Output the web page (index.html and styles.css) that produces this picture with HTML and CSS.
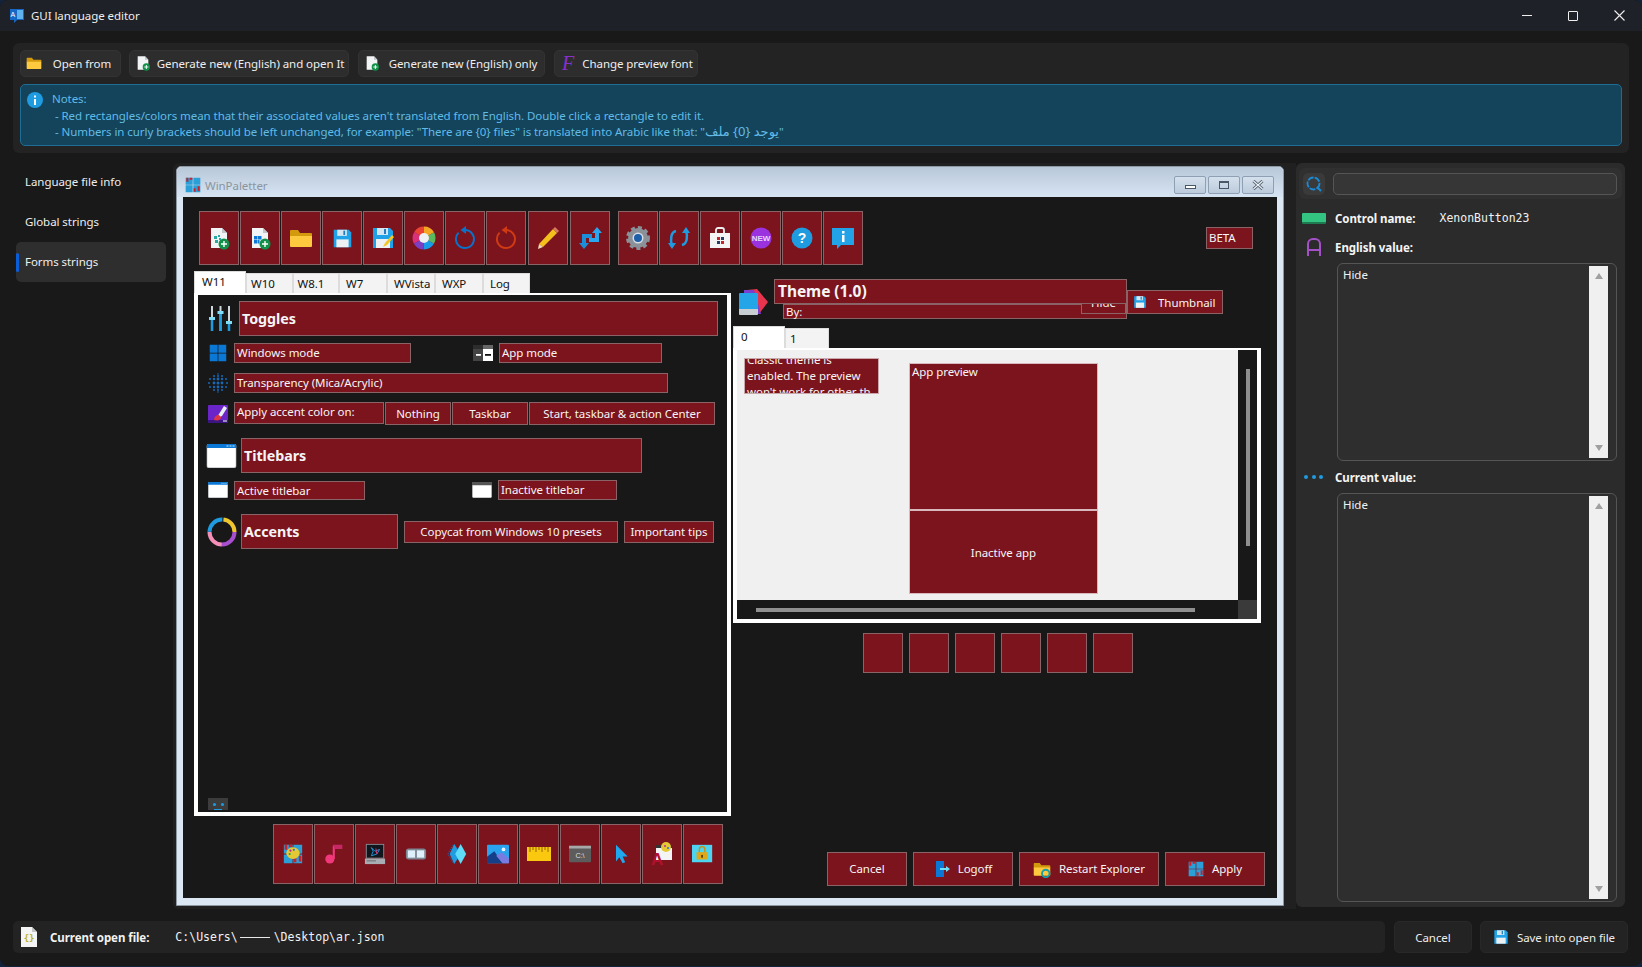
FILE: index.html
```html
<!DOCTYPE html>
<html lang="en">
<head>
    <meta charset="UTF-8">
    <title>GUI language editor</title>
    <link rel="stylesheet" href="styles.css">
</head>
<body>
<svg class="sprite" xmlns="http://www.w3.org/2000/svg">
    <symbol id="floppy" viewBox="0 0 24 24">
        <path d="M2 2h17l3 3v17H2z" fill="#1fa2e8"/>
        <rect x="6" y="2" width="11" height="7" fill="#d5e6f2"/>
        <rect x="13" y="3" width="2" height="5" fill="#1f7fc0"/>
        <rect x="5" y="13" width="14" height="9" fill="#eef1f4"/>
    </symbol>
    <symbol id="folder" viewBox="0 0 24 24">
        <path d="M1 5a1 1 0 0 1 1-1h7l2 3h11a1 1 0 0 1 1 1v3H1z" fill="#d49a0e"/>
        <path d="M1 10h22v10a1 1 0 0 1-1 1H2a1 1 0 0 1-1-1z" fill="#fcc93f"/>
    </symbol>
    <symbol id="newfile" viewBox="0 0 24 24">
        <path d="M4 2h11l5 5v15H4z" fill="#f1f3f4"/>
        <path d="M15 2l5 5h-5z" fill="#bfc5ca"/>
        <circle cx="17" cy="18" r="5.5" fill="#12904a"/>
        <path d="M17 15v6M14 18h6" stroke="#fff" stroke-width="1.4"/>
    </symbol>
    <symbol id="winlogo" viewBox="0 0 24 24">
        <path d="M1 1h10.5v10.5H1zM12.5 1H23v10.5H12.5zM1 12.5h10.5V23H1zM12.5 12.5H23V23H12.5z" fill="#0a78d4"/>
    </symbol>
    <symbol id="wintile" viewBox="0 0 24 24">
        <path d="M1 1h10.5v10.5H1zM12.5 1H23v10.5H12.5zM1 12.5h10.5V23H1zM12.5 12.5H23V23H12.5z" fill="#2a9fd8"/>
        <path d="M2 1h3v6H2zM7 1h4v3H7zM19 14h3v7h-3zM13 17h3v5h-3z" fill="#c8232c"/>
    </symbol>
    <symbol id="titlebar" viewBox="0 0 30 24">
        <rect x="0.5" y="0.5" width="29" height="23" rx="1.5" fill="#fff" stroke="#cfd3d8"/>
        <path d="M0 2a2 2 0 0 1 2-2h26a2 2 0 0 1 2 2v2H0z" fill="#0a78d4"/>
        <path d="M20 2h2M23 2h2M26 2h2" stroke="#cde5fa"/>
    </symbol>
</svg>

<div class="app">
    <header class="titlebar">
        <svg class="app-icon" viewBox="0 0 14 14"><path d="M0 0h14v11H7l-3 3v-3H0z" fill="#1668c4"/><rect x="7" y="1" width="6" height="9" fill="#5fb2ee"/><text x="0.6" y="8" font-size="7" fill="#fff" font-family="Liberation Sans">A</text></svg>
        <span class="app-title">GUI language editor</span>
        <div class="caption">
            <span class="cap-btn"><i class="cap-min"></i></span>
            <span class="cap-btn"><i class="cap-max"></i></span>
            <span class="cap-btn">
                <svg width="11" height="11" viewBox="0 0 11 11"><path d="M.5.5l10 10M10.500.5l-10 10" stroke="#eee" stroke-width="1.1"/></svg>
            </span>
        </div>
    </header>

    <section class="top-panel">
        <div class="tools">
            <button class="tool tool-open"><svg class="ico16"><use href="#folder"/></svg><span>Open from</span></button>
            <button class="tool tool-gen1"><svg class="ico16"><use href="#newfile"/></svg><span>Generate new (English) and open It</span></button>
            <button class="tool tool-gen2"><svg class="ico16"><use href="#newfile"/></svg><span>Generate new (English) only</span></button>
            <button class="tool tool-font"><i class="font-ico">F</i><span>Change preview font</span></button>
        </div>
        <div class="notes">
            <svg class="notes-ico" viewBox="0 0 16 16"><circle cx="8" cy="8" r="8" fill="#1f9be0"/><rect x="7" y="7" width="2" height="6" fill="#fff"/><rect x="7" y="3.500" width="2" height="2" fill="#fff"/></svg>
            <p class="notes-text">Notes:<br>
            &nbsp;- Red rectangles/colors mean that their associated values aren't translated from English. Double click a rectangle to edit it.<br>
            &nbsp;- Numbers in curly brackets should be left unchanged, for example: "There are {0} files" is translated into Arabic like that: "<span class="ar">يوجد {0} ملف</span>"</p>
        </div>
    </section>

    <main class="main">
        <nav class="sidebar">
            <a class="side-item">Language file info</a>
            <a class="side-item">Global strings</a>
            <a class="side-item active">Forms strings</a>
        </nav>

        <section class="canvas-panel">
            <div class="preview">
                <div class="preview-title">
                    <svg class="wp-logo" viewBox="0 0 24 24"><use href="#wintile"/></svg>
                    <span class="wp-name">WinPaletter</span>
                    <div class="wp-caps">
                        <span class="wp-cap"><i class="wp-min"></i></span>
                        <span class="wp-cap"><i class="wp-max"></i></span>
                        <span class="wp-cap"><svg width="12" height="10" viewBox="0 0 12 10"><path d="M1.500 1l9 8M10.500 1l-9 8" stroke="#4a5866" stroke-width="3"/><path d="M1.500 1l9 8M10.500 1l-9 8" stroke="#eef3f8" stroke-width="1.200"/></svg></span>
                    </div>
                </div>

                <div class="client">
                    <div class="toolbar">
                        <div class="red tb"><svg class="ico24" viewBox="0 0 24 24"><use href="#newfile"/><path d="M7 10h3v3H7zM11 9h2v2h-2zM8 14h3v3H8zM12 12h2v2h-2z" fill="#2aa9a0"/></svg></div>
                        <div class="red tb"><svg class="ico24" viewBox="0 0 24 24"><use href="#newfile"/><path d="M6 10h3.500v3.500H6zM10 10h3.500v3.500H10zM6 14h3.500v3.500H6zM10 14h1.500v3.500H10z" fill="#0a78d4"/></svg></div>
                        <div class="red tb"><svg class="ico24"><use href="#folder"/></svg></div>
                        <div class="red tb"><svg class="ico24 ico-small"><use href="#floppy"/></svg></div>
                        <div class="red tb"><svg class="ico24" viewBox="0 0 24 24"><use href="#floppy"/><path d="M12 21l2-4 7-8 2 2-7 8z" fill="#f3c623"/></svg></div>
                        <div class="red tb">
                            <svg class="ico24" viewBox="0 0 24 24"><g transform="rotate(-90 12 12)" fill="none" stroke-width="7" stroke-dasharray="8.380 42"><circle cx="12" cy="12" r="8" stroke="#f5a623"/><circle cx="12" cy="12" r="8" stroke="#5cb85c" stroke-dashoffset="-8.380"/><circle cx="12" cy="12" r="8" stroke="#1a9be8" stroke-dashoffset="-16.760"/><circle cx="12" cy="12" r="8" stroke="#7b3fc4" stroke-dashoffset="-25.140"/><circle cx="12" cy="12" r="8" stroke="#d8307a" stroke-dashoffset="-33.520"/><circle cx="12" cy="12" r="8" stroke="#ea4335" stroke-dashoffset="-41.900"/></g><circle cx="12" cy="12" r="5" fill="#eef0f2"/></svg>
                        </div>
                        <div class="red tb"><svg class="ico24" viewBox="0 0 24 24"><path d="M12 4a9 9 0 1 1-6.400 2.600" fill="none" stroke="#0a72c8" stroke-width="2"/><path d="M13 0v8L7.500 4z" fill="#0a72c8"/></svg></div>
                        <div class="red tb"><svg class="ico24" viewBox="0 0 24 24"><path d="M12 4a9 9 0 1 1-6.400 2.600" fill="none" stroke="#cf3a12" stroke-width="2"/><path d="M13 0v8L7.500 4z" fill="#cf3a12"/></svg></div>
                        <div class="red tb gap2"><svg class="ico24" viewBox="0 0 24 24"><path d="M3 18L17 3l4 4L7 21z" fill="#f3c01c"/><path d="M17 3l2-2 4 4-2 2z" fill="#d97a60"/><path d="M3 18l-1 5 5-2z" fill="#f0d9b8"/></svg></div>
                        <div class="red tb gap2"><svg class="ico24" viewBox="0 0 24 24"><path d="M19 1l5 6h-3v9H11v-4h6V7h-3z" fill="#2aa6ee"/><path d="M6 23L1 17h3V8h10v4H8v5h3z" fill="#1c8fdb"/></svg></div>
                        <div class="red tb group2"><svg class="ico24" viewBox="0 0 24 24"><circle cx="12" cy="12" r="10.500" fill="none" stroke="#8a9198" stroke-width="3" stroke-dasharray="4 3"/><circle cx="12" cy="12" r="7.500" fill="none" stroke="#8a9198" stroke-width="5"/><circle cx="12" cy="12" r="5.500" fill="#d8dde2"/><circle cx="12" cy="12" r="4" fill="#1d5fa8"/></svg></div>
                        <div class="red tb"><svg class="ico24" viewBox="0 0 24 24"><path d="M9 5C4 6 3 13 5 20" fill="none" stroke="#1f9be0" stroke-width="2.500"/><path d="M15 19c5-1 6-8 4-15" fill="none" stroke="#1f9be0" stroke-width="2.500"/><path d="M5 23l-4-6h8zM19 1l4 6h-8z" fill="#1f9be0"/></svg></div>
                        <div class="red tb"><svg class="ico24" viewBox="0 0 24 24"><path d="M8 7V4a2 2 0 0 1 2-2h4a2 2 0 0 1 2 2v3" fill="none" stroke="#eee" stroke-width="1.800"/><rect x="2" y="7" width="20" height="15" fill="#f4f4f4"/><path d="M9 11h3v3H9zM13 15h3v3h-3z" fill="#c8232c"/><path d="M13 11h3v3h-3zM9 15h3v3H9z" fill="#2a3f66"/></svg></div>
                        <div class="red tb"><svg class="ico24" viewBox="0 0 24 24"><circle cx="12" cy="12" r="10.500" fill="#9a32e0"/><text x="12" y="15" font-size="8" font-weight="700" text-anchor="middle" fill="#e8d5f8" font-family="Liberation Sans">NEW</text></svg></div>
                        <div class="red tb"><svg class="ico24" viewBox="0 0 24 24"><circle cx="12" cy="12" r="10.500" fill="#1f9be0"/><text x="12" y="17" font-size="14" font-weight="700" text-anchor="middle" fill="#fff" font-family="Liberation Sans">?</text></svg></div>
                        <div class="red tb"><svg class="ico24" viewBox="0 0 24 24"><path d="M1 2h22v17H10l-4 4v-4H1z" fill="#22a3e8"/><rect x="11" y="5" width="2.500" height="2.500" fill="#fff"/><rect x="11" y="9" width="2.500" height="7" fill="#fff"/></svg></div>
                        <div class="red beta">BETA</div>
                    </div>

                    <div class="stage">
                        <div class="col-left">
                            <div class="tabs">
                                <span class="tab active w11">W11</span>
                                <span class="tab w-a">W10</span>
                                <span class="tab w-a">W8.1</span>
                                <span class="tab w-b">W7</span>
                                <span class="tab w-b">WVista</span>
                                <span class="tab w-b">WXP</span>
                                <span class="tab w-a tab-log">Log</span>
                            </div>
                            <div class="tab-frame">
                                <div class="row row-head row-toggles">
                                    <svg class="ico-toggles" viewBox="0 0 23 25"><path d="M3 0v25M11.500 0v25M20 0v25" stroke="#cfd6dc" stroke-width="2"/><path d="M3 12v13M11.500 7v18M20 16v9" stroke="#1f9be0" stroke-width="2.500"/><path d="M0 11h6v3H0zM8.500 5h6v3h-6zM17 15h6v3h-6z" fill="#7fdcf8"/></svg>
                                    <div class="red head w479">Toggles</div>
                                </div>
                                <div class="row row-20 mt7">
                                    <svg class="ico-cell" viewBox="0 0 24 24"><use href="#winlogo"/></svg>
                                    <div class="red txt w176">Windows mode</div>
                                    <svg class="ico-app" viewBox="0 0 20 16"><rect width="20" height="16" fill="#444"/><rect width="10" height="4" fill="#2c2c2c"/><rect x="10" width="10" height="16" fill="#fff"/><rect x="10" width="10" height="4" fill="#666"/><rect x="3" y="9" width="5" height="1.800" fill="#fff"/><rect x="12" y="9" width="6" height="1.800" fill="#111"/></svg>
                                    <div class="red txt w163">App mode</div>
                                </div>
                                <div class="row row-20 mt10">
                                    <svg class="ico-cell-wide" viewBox="0 0 20 20"><g fill="#1668b8"><circle cx="10" cy="1" r=".8"/><circle cx="6" cy="3" r="1"/><circle cx="10" cy="3" r="1"/><circle cx="14" cy="3" r="1"/><circle cx="2" cy="6" r="1"/><circle cx="6" cy="6" r="1.200"/><circle cx="10" cy="6" r="1.400"/><circle cx="14" cy="6" r="1.200"/><circle cx="18" cy="6" r="1"/><circle cx="1" cy="10" r="1"/><circle cx="6" cy="10" r="1.400"/><circle cx="10" cy="10" r="1.500"/><circle cx="14" cy="10" r="1.400"/><circle cx="19" cy="10" r="1"/><circle cx="2" cy="14" r="1"/><circle cx="6" cy="14" r="1.200"/><circle cx="10" cy="14" r="1.400"/><circle cx="14" cy="14" r="1.200"/><circle cx="18" cy="14" r="1"/><circle cx="6" cy="17" r="1"/><circle cx="10" cy="17" r="1"/><circle cx="14" cy="17" r="1"/><circle cx="10" cy="19" r=".8"/></g></svg>
                                    <div class="red txt w434">Transparency (Mica/Acrylic)</div>
                                </div>
                                <div class="row row-23 mt9">
                                    <svg class="ico-cell-wide" viewBox="0 0 20 18"><rect width="20" height="18" rx="1" fill="#6a24c8"/><rect y="15" width="20" height="3" fill="#3b1583"/><path d="M8 14l3-5 5-8 3 2-5 8z" fill="#e8eef5"/><path d="M6 15c0-3 2-5 5-5l2 2c0 3-3 4-7 3z" fill="#e03545"/><path d="M15 16h4" stroke="#fff"/></svg>
                                    <div class="red txt w150">Apply accent color on:</div>
                                    <div class="red btn w66">Nothing</div>
                                    <div class="red btn w76">Taskbar</div>
                                    <div class="red btn w186 gap1">Start, taskbar &amp; action Center</div>
                                </div>
                                <div class="row row-head mt13 shift-l">
                                    <svg class="ico-tb" viewBox="0 0 30 24"><use href="#titlebar"/></svg>
                                    <div class="red head w401">Titlebars</div>
                                </div>
                                <div class="row row-20 mt7">
                                    <svg class="ico-cell-bar" viewBox="0 0 30 24"><use href="#titlebar"/></svg>
                                    <div class="red txt w131 w-low">Active titlebar</div>
                                    <svg class="ico-cell-bar ico-bar2" viewBox="0 0 30 24"><rect x=".5" y=".5" width="29" height="23" rx="1.500" fill="#fff"/><path d="M0 2a2 2 0 0 1 2-2h26a2 2 0 0 1 2 2v3H0z" fill="#555"/></svg>
                                    <div class="red txt w119">Inactive titlebar</div>
                                </div>
                                <div class="row row-head mt14 shift-l1">
                                    <svg class="ico-ring" viewBox="0 0 30 30"><circle cx="15" cy="15" r="12.500" fill="none" stroke="#f0c62e" stroke-width="4" stroke-dasharray="19.640 60" stroke-dashoffset="19.640"/><circle cx="15" cy="15" r="12.500" fill="none" stroke="#a84fd0" stroke-width="4" stroke-dasharray="19.640 60"/><circle cx="15" cy="15" r="12.500" fill="none" stroke="#f48fb8" stroke-width="4" stroke-dasharray="19.640 60" stroke-dashoffset="-19.640"/><circle cx="15" cy="15" r="12.500" fill="none" stroke="#1f9be0" stroke-width="4" stroke-dasharray="19.640 60" stroke-dashoffset="-39.280"/></svg>
                                    <div class="red head w157">Accents</div>
                                    <div class="red btn w214 btn-mid">Copycat from Windows 10 presets</div>
                                    <div class="red btn w90 btn-mid">Important tips</div>
                                </div>
                                <div class="bot-ico"><i></i><i></i></div>
                            </div>
                            <div class="bottom-icons">
                                <div class="red bi"><svg class="ico20" viewBox="0 0 24 24"><use href="#wintile"/><ellipse cx="12" cy="11" rx="8" ry="7" fill="#e5c934"/><circle cx="9" cy="8" r="1.300" fill="#b02ab0"/><circle cx="13" cy="7" r="1.300" fill="#2a6fd8"/><circle cx="8" cy="12" r="1.300" fill="#30a050"/></svg></div>
                                <div class="red bi"><svg class="ico20" viewBox="0 0 24 24"><circle cx="7" cy="18" r="5.500" fill="#f0387a"/><rect x="10.500" y="2" width="2.500" height="16" fill="#f0387a"/><path d="M10.500 1H22v5H13z" fill="#c62866"/></svg></div>
                                <div class="red bi"><svg class="ico22" viewBox="0 0 24 24"><rect x="2" y="1" width="20" height="16" fill="#8a8f96"/><rect x="3" y="2" width="18" height="14" fill="#11151c"/><path d="M8 5l4 4 5-2-3 5-6 2 2-5z" fill="none" stroke="#1f9be0"/><path d="M13 6l1 6" stroke="#d83a80"/><rect x="1" y="17" width="22" height="6" fill="#a8adb3"/><rect x="3" y="19" width="10" height="1" fill="#666"/></svg></div>
                                <div class="red bi"><svg class="ico22" viewBox="0 0 24 24"><rect x="1" y="6" width="22" height="12" rx="3" fill="#7d8894"/><rect x="3" y="8" width="8" height="8" fill="#dff0fa"/><rect x="13" y="8" width="8" height="8" fill="#dff0fa"/></svg></div>
                                <div class="red bi"><svg class="ico22" viewBox="0 0 24 24"><path d="M8 2L2 12l6 10" fill="none" stroke="#1668b8" stroke-dasharray="1.500 1"/><path d="M9 1l7 11-7 11-5-11z" fill="#1f9be0"/><path d="M16 1l6 11-6 11-6-11z" fill="#5fdcf8"/></svg></div>
                                <div class="red bi"><svg class="ico22" viewBox="0 0 24 24"><rect width="24" height="20" y="2" rx="1" fill="#2aa3ee"/><path d="M0 22V15l8-6 9 13z" fill="#153f88"/><path d="M10 14l6-4 8 7v5h-7z" fill="#7a7be0"/><circle cx="18" cy="7" r="2" fill="#e8f4fc"/></svg></div>
                                <div class="red bi"><svg class="ico24" viewBox="0 0 24 24"><rect y="5" width="24" height="14" fill="#fac80e"/><path d="M3 5v5M6 5v3M9 5v5M12 5v3M15 5v5M18 5v3M21 5v5" stroke="#a87808" stroke-width="1.200"/></svg></div>
                                <div class="red bi"><svg class="ico22" viewBox="0 0 24 24"><rect y="3" width="24" height="18" rx="1" fill="#5c5c5c"/><rect y="3" width="24" height="3" fill="#a8a8a8"/><text x="12" y="16" font-size="8" text-anchor="middle" fill="#ddd" font-family="Liberation Sans">C:\</text></svg></div>
                                <div class="red bi"><svg class="ico20" viewBox="0 0 24 24"><path d="M6 1v20l4-5 4 7 3-1-3-7h6z" fill="#1ea8ee"/></svg></div>
                                <div class="red bi"><svg class="ico24" viewBox="0 0 24 24"><rect x="6" y="3" width="16" height="15" fill="#f4f4f4"/><rect x="6" y="3" width="16" height="3" fill="#333"/><circle cx="16" cy="5" r="5" fill="#e5c934"/><circle cx="15" cy="4" r="1" fill="#b02ab0"/><circle cx="18" cy="6" r="1" fill="#2a6fd8"/><text x="7" y="23" font-size="17" font-weight="700" text-anchor="middle" fill="#b4102e" font-family="Liberation Sans">A</text></svg></div>
                                <div class="red bi"><svg class="ico22" viewBox="0 0 24 24"><rect y="2" width="22" height="19" fill="#4cd4f0"/><path d="M8 10V7a3 3 0 0 1 6 0v3" fill="none" stroke="#c89010" stroke-width="1.500"/><rect x="5" y="10" width="12" height="8" fill="#e0a818"/><rect x="10" y="13" width="2" height="3" fill="#5a4208"/></svg></div>
                            </div>
                        </div>

                        <div class="col-right">
                            <div class="theme-head">
                                <svg class="theme-ico" viewBox="0 0 29 27"><path d="M8 2l10-1 11 13-9 12z" fill="#e8344c"/><path d="M5 2l10 0 7 24H5z" fill="#7b3fd0"/><path d="M0 6a1 1 0 0 1 1-1h17a1 1 0 0 1 1 1v15H0z" fill="#23a5e8"/><path d="M0 21h19v5a1 1 0 0 1-1 1H1a1 1 0 0 1-1-1z" fill="#c9ced3"/></svg>
                                <div class="theme-titles">
                                    <div class="red theme-name">Theme (1.0)</div>
                                    <div class="red theme-by">By:</div>
                                </div>
                                <div class="red btn hide-btn">Hide</div>
                                <div class="red btn thumb-btn"><svg class="ico12"><use href="#floppy"/></svg><span>Thumbnail</span></div>
                            </div>
                            <div class="tabs">
                                <span class="tab active t0">0</span>
                                <span class="tab t1">1</span>
                            </div>
                            <div class="preview-frame">
                                <div class="pv-area">
                                    <div class="red classic"><div class="classic-in">Classic theme is<br>enabled. The preview<br>won't work for other th</div></div>
                                    <div class="apps">
                                        <div class="red app-a">App preview</div>
                                        <div class="red app-b">Inactive app</div>
                                    </div>
                                </div>
                                <div class="pv-vs"><i></i></div>
                                <div class="pv-hs"><i></i></div>
                                <div class="pv-corner"></div>
                            </div>
                            <div class="squares">
                                <div class="red sq"></div><div class="red sq"></div><div class="red sq"></div>
                                <div class="red sq"></div><div class="red sq"></div><div class="red sq"></div>
                            </div>
                            <div class="actions">
                                <div class="red act w80">Cancel</div>
                                <div class="red act w100">
                                    <svg class="ico16" viewBox="0 0 16 16"><rect x="2" width="8" height="16" fill="#0a78d4"/><path d="M6 7h6V5l4 3-4 3V9H6z" fill="#6fe0f8"/></svg><span>Logoff</span>
                                </div>
                                <div class="red act w140">
                                    <svg class="ico18" viewBox="0 0 24 24"><use href="#folder"/><circle cx="17" cy="18" r="5" fill="none" stroke="#14a0a8" stroke-width="2.500"/></svg><span>Restart Explorer</span>
                                </div>
                                <div class="red act w100">
                                    <svg class="ico16"><use href="#wintile"/></svg><span>Apply</span>
                                </div>
                            </div>
                        </div>
                    </div>
                </div>
            </div>
        </section>

        <aside class="props">
            <div class="search-bar">
                <span class="search-btn"><svg width="16" height="16" viewBox="0 0 16 16"><circle cx="7.500" cy="7.500" r="6" fill="none" stroke="#1a8ad4" stroke-width="1.800" stroke-dasharray="6 1.200"/><path d="M11 11l4 4" stroke="#1a8ad4" stroke-width="2"/></svg></span>
                <div class="search-input"></div>
            </div>
            <div class="prop-row name-row">
                <span class="green-ico"></span>
                <b class="prop-label">Control name:</b>
                <span class="prop-mono">XenonButton23</span>
            </div>
            <div class="prop-row val-row">
                <span class="a-ico"></span>
                <b class="prop-label">English value:</b>
            </div>
            <div class="valuebox box-en">
                <div class="val-text">Hide</div>
                <div class="vscroll"><i class="up"></i><i class="down"></i></div>
            </div>
            <div class="prop-row val-row cur-row">
                <span class="dots-ico"><i></i><i></i><i></i></span>
                <b class="prop-label">Current value:</b>
            </div>
            <div class="valuebox box-cur">
                <div class="val-text">Hide</div>
                <div class="vscroll"><i class="up"></i><i class="down"></i></div>
            </div>
        </aside>
    </main>

    <footer class="bottom">
        <div class="path-bar">
            <svg class="json-ico" viewBox="0 0 16 20"><path d="M0 0h11l5 5v15H0z" fill="#f4f4f4"/><path d="M11 0l5 5h-5z" fill="#c4c4c4"/><text x="8" y="14" font-size="9" font-weight="700" text-anchor="middle" fill="#b8b030" font-family="DejaVu Sans Mono">{}</text></svg>
            <b class="path-label">Current open file:</b>
            <span class="path-value">C:\Users\<i class="redact"></i>\Desktop\ar.json</span>
        </div>
        <button class="foot-btn foot-cancel">Cancel</button>
        <button class="foot-btn foot-save"><svg class="ico16"><use href="#floppy"/></svg><span>Save into open file</span></button>
    </footer>
</div>
</body>
</html>
```

FILE: styles.css
```css
*{
    box-sizing: border-box;
    padding: 0;
    margin: 0;
}

html,body{
    width: 1642px;
    height: 967px;
    overflow: hidden;
    background: #14233c;
}

body{
    font-family: "Noto Sans", "DejaVu Sans", sans-serif;
    font-size: 11.500px;
    letter-spacing: -0.06px;
    color: #f2f2f2;
}

i{
    font-style: normal;
}

.sprite{
    display: none;
}

.app{
    width: 1642px;
    height: 966px;
    background: #191919;
    border-radius: 8px 8px 8px 8px;
    overflow: hidden;
    display: flex;
    flex-direction: column;
}

/* title bar */
.titlebar{
    height: 31px;
    flex: none;
    background: #1e2127;
    display: flex;
    align-items: center;
    padding-left: 10px;
}

.app-icon{
    width: 14px;
    height: 14px;
    margin-right: 7px;
}

.app-title{
    color: #eee;
}

.caption{
    margin-left: auto;
    display: flex;
    height: 100%;
}

.cap-btn{
    width: 46px;
    display: flex;
    align-items: center;
    justify-content: center;
}

.cap-min{
    width: 10px;
    height: 1px;
    background: #eee;
}

.cap-max{
    width: 10px;
    height: 10px;
    border: 1px solid #eee;
    border-radius: 1px;
}

/* top panel */
.top-panel{
    margin: 12px 13px 0;
    height: 110px;
    flex: none;
    padding: 7px;
    background: #232323;
    border-radius: 6px;
}

.tools{
    display: flex;
    height: 27px;
}

.tool{
    display: flex;
    align-items: center;
    height: 27px;
    background: #2d2d2d;
    border: 1px solid #333;
    border-radius: 5px;
    color: #eee;
    font: inherit;
    letter-spacing: inherit;
    white-space: nowrap;
    padding: 0 0 1px 5px;
}

.tool span{
    flex: 1;
    text-align: center;
    padding-left: 2px;
}

.tool-open{
    width: 101px;
}

.tool-gen1{
    width: 220px;
    margin-left: 8px;
}

.tool-gen2{
    width: 187px;
    margin-left: 9px;
}

.tool-font{
    width: 144px;
    margin-left: 9px;
}

.font-ico{
    width: 16px;
    font-family: "Liberation Serif", serif;
    font-style: italic;
    font-size: 20px;
    line-height: 20px;
    color: #8a2fd0;
    text-align: center;
}

.ico12{
    width: 12px;
    height: 12px;
}

.ico16{
    width: 16px;
    height: 16px;
    flex: none;
}

.ico18{
    width: 18px;
    height: 18px;
    flex: none;
}

.ico20{
    width: 20px;
    height: 20px;
}

.ico22{
    width: 22px;
    height: 22px;
}

.ico24{
    width: 24px;
    height: 24px;
}

.ico-small{
    width: 21px;
    height: 21px;
}

.notes{
    margin-top: 7px;
    height: 62px;
    background: #13445c;
    border: 1px solid #1f6c94;
    border-radius: 5px;
    display: flex;
    padding: 6px 6px;
    color: #62bbe6;
}

.notes-ico{
    width: 16px;
    height: 16px;
    margin-top: 1px;
    flex: none;
}

.notes-text{
    margin-left: 9px;
    line-height: 16.700px;
}

.ar{
    font-size: 13px;
    line-height: 12px;
    letter-spacing: 0;
}

/* main */
.main{
    display: flex;
    height: 746px;
    margin-top: 10px;
    flex: none;
}

.sidebar{
    width: 173px;
    flex: none;
    padding-left: 16px;
}

.side-item{
    display: flex;
    align-items: center;
    width: 150px;
    height: 39.500px;
    padding: 0 0 2px 9px;
    border-radius: 5px;
    color: #eee;
    position: relative;
}

.side-item.active{
    background: #2e2e2e;
    padding-bottom: 1px;
}

.side-item.active::before{
    content: "";
    position: absolute;
    left: 0;
    top: 11px;
    width: 3px;
    height: 19px;
    border-radius: 2px;
    background: #0a5ed8;
}

.canvas-panel{
    width: 1123px;
    flex: none;
    padding: 3px;
    background: #202020;
    border-radius: 6px 0 0 6px;
}

.preview{
    width: 1108px;
    height: 740px;
    background: #dbe7f3;
    border: 1px solid #8d98a3;
    border-radius: 5px 5px 0 0;
    padding: 0 6px 7px;
}

.preview-title{
    height: 30px;
    margin: 0 -6px;
    padding: 6px 9px 0 8px;
    border-radius: 5px 5px 0 0;
    background: linear-gradient(#b9c8d9, #d6e4f2);
    display: flex;
    align-items: center;
}

.wp-logo{
    width: 16px;
    height: 16px;
}

.wp-name{
    margin-left: 4px;
    color: #8b949e;
}

.wp-caps{
    margin-left: auto;
    display: flex;
    gap: 2px;
}

.wp-cap{
    width: 32px;
    height: 18px;
    border: 1px solid #8f9fb4;
    border-radius: 2px;
    background: linear-gradient(#d5e0ec, #bccbdc);
    display: flex;
    align-items: center;
    justify-content: center;
}

.wp-min{
    width: 11px;
    height: 4px;
    margin-top: 3px;
    border: 1px solid #4a5866;
    background: #fff;
}

.wp-max{
    width: 10px;
    height: 8px;
    border: 1px solid #4a5866;
    border-top-width: 2px;
}

.client{
    height: 701px;
    background: #181818;
    padding: 14px 0 0 11px;
}

.red{
    background: #7c141e;
    border: 1px solid #8a6367;
    color: #f5f5f5;
}

.toolbar{
    display: flex;
    height: 54px;
    gap: 1px;
    margin-left: 5px;
}

.tb{
    width: 40px;
    height: 54px;
    display: flex;
    align-items: center;
    justify-content: center;
}

.gap2{
    margin-left: 1px;
}

.group2{
    margin-left: 7px;
}

.beta{
    width: 47px;
    height: 22px;
    margin: 16px 24px 0 auto;
    padding-left: 2px;
    line-height: 20px;
}

.stage{
    display: flex;
    align-items: flex-start;
    margin-top: 6px;
}

.tabs{
    display: flex;
    align-items: flex-end;
    height: 22px;
}

.tab{
    height: 20px;
    background: #f3f3f3;
    border: 1px solid #dcdcdc;
    border-bottom: none;
    color: #111;
    padding: 2px 0 0 4px;
}

.tab.active{
    height: 22px;
    background: #fff;
    padding: 2px 0 0 7px;
}

.w11{
    width: 52px;
}

.w-a{
    width: 46.500px;
}

.w-b{
    width: 48px;
    padding-left: 6px;
}

.tab-log{
    padding-left: 6px;
}

.col-left{
    width: 537px;
    flex: none;
}

.tab-frame{
    width: 537px;
    height: 523px;
    border: solid #fff;
    border-width: 2px 4px 4px;
    display: flex;
    flex-direction: column;
    padding: 0 0 2px 10px;
}

.row{
    display: flex;
    align-items: center;
}

.row-head{
    height: 35px;
}

.row-toggles{
    margin-top: 6px;
    padding-left: 1px;
}

.row-20{
    height: 20px;
}

.row-23{
    height: 23px;
}

.mt7{
    margin-top: 7px;
}

.mt9{
    margin-top: 9px;
}

.mt10{
    margin-top: 10px;
}

.mt13{
    margin-top: 13px;
}

.mt14{
    margin-top: 14px;
}

.shift-l{
    margin-left: -2px;
}

.shift-l1{
    margin-left: -1px;
}

.ico-toggles{
    width: 23px;
    height: 25px;
    margin-right: 7px;
}

.ico-cell{
    width: 18px;
    height: 18px;
    margin: 0 7px 0 1px;
}

.ico-cell-wide{
    width: 20px;
    height: 20px;
    margin-right: 6px;
    flex: none;
}

.ico-cell-bar{
    width: 20px;
    height: 16px;
    margin-right: 6px;
}

.ico-bar2{
    margin-left: 107px;
}

.ico-app{
    width: 20px;
    height: 16px;
    margin: 0 6px 0 62px;
}

.ico-tb{
    width: 31px;
    height: 24px;
    margin-right: 4px;
}

.ico-ring{
    width: 30px;
    height: 30px;
    margin-right: 4px;
}

.head{
    height: 35px;
    padding-left: 2px;
    line-height: 34px;
    font-size: 14.300px;
    font-weight: 700;
}

.txt{
    height: 20px;
    padding-left: 2px;
    line-height: 18px;
}

.btn{
    height: 23px;
    display: flex;
    align-items: center;
    justify-content: center;
}

.row-23 .txt{
    height: 22px;
    align-self: flex-start;
}

.gap1{
    margin-left: 1px;
}

.row-23 .btn{
    margin-left: 1px;
}

.btn-mid{
    height: 22px;
    margin-left: 6px;
}

.w66{
    width: 66px;
}

.w76{
    width: 76px;
}

.w80{
    width: 80px;
}

.w90{
    width: 90px;
}

.w100{
    width: 100px;
}

.w119{
    width: 119px;
}

.w131{
    width: 131px;
}

.w140{
    width: 140px;
}

.w150{
    width: 150px;
}

.w157{
    width: 157px;
}

.w163{
    width: 163px;
}

.w176{
    width: 177px;
}

.w186{
    width: 186px;
}

.w214{
    width: 214px;
}

.w401{
    width: 401px;
}

.w434{
    width: 434px;
}

.w479{
    width: 479px;
}

.w-low{
    height: 19px;
    margin-top: 1px;
}

.bot-ico{
    margin-top: auto;
    width: 20px;
    height: 12px;
    background: #3c3c3c linear-gradient(#1f9be0, #1f9be0) center bottom / 8px 1px no-repeat;
    display: flex;
    justify-content: center;
    gap: 5px;
    padding-top: 5px;
}

.bot-ico i{
    width: 3px;
    height: 3px;
    border-radius: 50%;
    background: #1f9be0;
}

.bottom-icons{
    display: flex;
    gap: 1px;
    margin: 8px 0 0 79px;
}

.bi{
    width: 40px;
    height: 60px;
    display: flex;
    align-items: center;
    justify-content: center;
}

.col-right{
    width: 528px;
    flex: none;
    margin-left: 2px;
}

.theme-head{
    height: 55px;
    position: relative;
    display: flex;
    align-items: flex-start;
    padding: 8px 0 0 6px;
}

.theme-ico{
    width: 29px;
    height: 27px;
    margin: 9px 6px 0 0;
}

.theme-titles{
    width: 353px;
}

.theme-name{
    position: relative;
    z-index: 2;
    height: 25px;
    padding-left: 3px;
    line-height: 22px;
    font-size: 15.500px;
    font-weight: 700;
}

.theme-by{
    height: 15px;
    margin-left: 9px;
    padding-left: 2px;
    line-height: 14px;
}

/* sits under the title box, only its lower edge shows */
.hide-btn{
    position: absolute;
    z-index: 1;
    left: 348px;
    top: 19px;
    width: 45px;
    height: 24px;
}

.thumb-btn{
    width: 96px;
    height: 24px;
    margin-top: 11px;
    padding-left: 5px;
    justify-content: flex-start;
}

.thumb-btn span{
    margin-left: 11px;
}

.thumb-btn .ico12{
    width: 14px;
    height: 14px;
}

.t0{
    width: 52px;
}

.t1{
    width: 44px;
}

.preview-frame{
    width: 528px;
    height: 275px;
    border: solid #fff;
    border-width: 2px 4px 4px;
    display: grid;
    grid-template-columns: 501px 19px;
    grid-template-rows: 250px 19px;
}

.pv-area{
    background: #f0f0f0;
    display: flex;
    align-items: flex-start;
    padding: 8px 0 0 7px;
}

.classic{
    width: 135px;
    height: 36px;
    overflow: hidden;
    border-color: #c8a8ac;
    line-height: 16px;
    padding-left: 2px;
}

.classic-in{
    margin-top: -7px;
    white-space: nowrap;
}

.apps{
    width: 189px;
    margin: 5px 0 0 30px;
}

.app-a{
    height: 147px;
    border-color: #d8b8bc;
    padding-left: 2px;
}

.app-b{
    height: 84px;
    border-color: #d8b8bc;
    display: flex;
    align-items: center;
    justify-content: center;
}

.pv-vs{
    background: #181818;
    padding: 19px 0 0 8px;
}

.pv-vs i{
    display: block;
    width: 4px;
    height: 177px;
    background: #8f8f8f;
}

.pv-hs{
    background: #181818;
    padding: 8px 0 0 19px;
}

.pv-hs i{
    display: block;
    width: 439px;
    height: 4px;
    background: #8f8f8f;
}

.pv-corner{
    background: #3a3a3a;
}

.squares{
    display: flex;
    gap: 6px;
    margin: 10px 0 0 130px;
}

.sq{
    width: 40px;
    height: 40px;
}

.actions{
    display: flex;
    gap: 6px;
    margin: 179px 0 0 94px;
}

.act{
    height: 34px;
    flex: none;
    display: flex;
    align-items: center;
    justify-content: center;
    gap: 8px;
    padding-bottom: 1px;
}

/* right panel */
.props{
    width: 329px;
    height: 744px;
    flex: none;
    background: #2b2b2b;
    border-radius: 6px;
    padding: 5px 3px;
}

.search-bar{
    height: 31px;
    display: flex;
    padding: 5px 5px 4px 4px;
    background: #303030;
    border-radius: 6px;
}

.search-btn{
    width: 22px;
    height: 22px;
    background: #3a3a3a;
    border-radius: 5px;
    display: flex;
    align-items: center;
    justify-content: center;
}

.search-input{
    flex: 1;
    margin-left: 8px;
    background: #363636;
    border: 1px solid #555;
    border-radius: 5px;
}

.prop-row{
    display: flex;
    align-items: center;
}

.name-row{
    height: 16px;
    margin-top: 11px;
}

.val-row{
    height: 20px;
    margin-top: 11px;
}

.cur-row{
    margin-top: 6px;
}

.green-ico{
    width: 24px;
    height: 11px;
    margin-left: 3px;
    background: #33c481;
    border-bottom: 2px solid #1e7a50;
    border-radius: 1px;
    flex: none;
}

.a-ico{
    width: 14px;
    height: 18px;
    margin-left: 8px;
    margin-right: 5px;
    border: 2px solid #a451c8;
    border-bottom: none;
    border-radius: 6px 6px 0 0;
    flex: none;
    background: linear-gradient(#a451c8, #a451c8) 0 9px / 100% 2px no-repeat;
}

.dots-ico{
    width: 19px;
    margin-left: 5px;
    margin-right: 3px;
    display: flex;
    justify-content: space-between;
    flex: none;
}

.dots-ico i{
    width: 4px;
    height: 4px;
    border-radius: 50%;
    background: #1f9be0;
}

.prop-label{
    margin-left: 9px;
    color: #f5f5f5;
}

.prop-mono{
    margin-left: 24px;
    font-family: "DejaVu Sans Mono", monospace;
    font-size: 11.500px;
    letter-spacing: 0;
}

.valuebox{
    width: 280px;
    margin: 6px 0 0 38px;
    border: 1px solid #555;
    border-radius: 6px;
    background: #2e2e2e;
    display: flex;
    justify-content: space-between;
    padding: 2px 8px 2px 5px;
}

.box-en{
    height: 198px;
}

.box-cur{
    height: 409px;
}

.val-text{
    line-height: 17px;
}

.vscroll{
    width: 19px;
    background: #f0f0f0;
    display: flex;
    flex-direction: column;
    justify-content: space-between;
    align-items: center;
    padding: 7px 0;
}

.vscroll i{
    width: 0;
    height: 0;
    border-left: 4.500px solid transparent;
    border-right: 4.500px solid transparent;
}

.vscroll .up{
    border-bottom: 6px solid #a0a0a0;
}

.vscroll .down{
    border-top: 6px solid #a0a0a0;
}

/* bottom bar */
.bottom{
    display: flex;
    height: 32px;
    margin: 12px 0 0 13px;
    flex: none;
}

.path-bar{
    width: 1372px;
    background: #232323;
    border-radius: 5px;
    display: flex;
    align-items: center;
    padding-left: 8px;
}

.json-ico{
    width: 16px;
    height: 20px;
}

.path-label{
    margin-left: 13px;
}

.path-value{
    margin-left: 26px;
    font-family: "DejaVu Sans Mono", monospace;
    font-size: 11.500px;
    letter-spacing: 0;
}

.redact{
    display: inline-block;
    width: 30px;
    height: 1px;
    margin: 0 4px 3px 2px;
    background: #e8e8e8;
}

.foot-btn{
    height: 32px;
    background: #232323;
    border: 1px solid #282828;
    border-radius: 5px;
    color: #eee;
    font: inherit;
    letter-spacing: inherit;
    display: flex;
    align-items: center;
    justify-content: center;
}

.foot-cancel{
    width: 78px;
    margin-left: 9px;
}

.foot-save{
    width: 148px;
    margin-left: 8px;
    gap: 8px;
}
```
